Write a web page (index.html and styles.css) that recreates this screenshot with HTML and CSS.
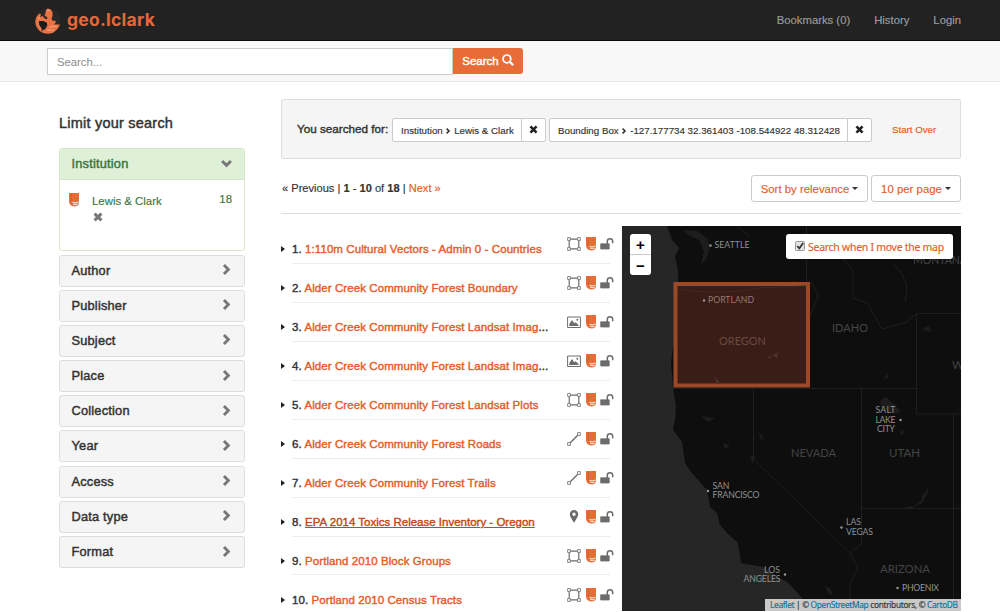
FILE: index.html
```
<!DOCTYPE html>
<html lang="en">
<head>
<meta charset="utf-8">
<title>geo.lclark</title>
<link rel="stylesheet" href="styles.css">
</head>
<body>
<svg class="defs" width="0" height="0">
  <symbol id="chevron" viewBox="0 0 10 10"><path d="M2.700 1 6.700 5 2.700 9" fill="none" stroke="currentColor" stroke-width="2.600"/></symbol>
  <symbol id="cross" viewBox="0 0 10 10"><path d="M1.600 1.600 8.400 8.400M8.400 1.600 1.600 8.400" fill="none" stroke="currentColor" stroke-width="2.900"/></symbol>
  <symbol id="shield" viewBox="0 0 12 14"><path d="M1 0H11V9Q11 13.500 6.500 13.500Q1 13 1 8Z" fill="#e86c35"/><path d="M3.300 1V8.500" stroke="#d0582a" stroke-width=".8"/><path d="M4.500 9.300Q7 10.500 10.700 9M5 11Q7 12 9.500 11.300" fill="none" stroke="#fbd9c8" stroke-width="1.200"/></symbol>
  <symbol id="unlock" viewBox="0 0 14 14"><path d="M.7 6.800H9.200V12H.7Z" fill="#6c6c6c" stroke="#6c6c6c" stroke-width=".8" stroke-linejoin="round"/><path d="M7.300 7V4.300Q7.300 1.700 10 1.700Q12.700 1.700 12.700 4.300V6.300" fill="none" stroke="#6c6c6c" stroke-width="1.500"/></symbol>
  <symbol id="polygon" viewBox="0 0 14 14"><g fill="#fff" stroke="#6c6c6c"><path d="M2.200 2.200H11.800V11.800H2.200Z" stroke-width="1.200"/><path d="M.6.600H3.400V3.400H.6ZM10.600.600H13.400V3.400H10.600ZM.6 10.600H3.400V13.400H.6ZM10.600 10.600H13.400V13.400H10.600Z" stroke-width=".8"/></g></symbol>
  <symbol id="line" viewBox="0 0 14 14"><g fill="#fff" stroke="#6c6c6c"><path d="M2 12 12 2" stroke-width="1.400"/><path d="M.6 10.600H3.400V13.400H.6ZM10.600.600H13.400V3.400H10.600Z" stroke-width=".8"/></g></symbol>
  <symbol id="image" viewBox="0 0 14 14"><path d="M.6 2H13.400V12.500H.6Z" fill="#fff" stroke="#6c6c6c"/><path d="M2.300 11V9L5 5 7.200 8.300 8.600 7.200 11.500 10V11Z" fill="#6c6c6c"/><circle cx="10.300" cy="4.700" r="1" fill="#6c6c6c"/></symbol>
  <symbol id="point" viewBox="0 0 14 14"><path fill-rule="evenodd" d="M7 0A4.200 4.200 0 0 1 11.200 4.200Q11.200 6.500 7 12.700Q2.800 6.500 2.800 4.200A4.200 4.200 0 0 1 7 0ZM7 2.600A1.700 1.700 0 1 0 7 6A1.700 1.700 0 1 0 7 2.600Z" fill="#6c6c6c"/></symbol>
</svg>

<header class="navbar">
  <a class="brand">
    <svg class="globe" viewBox="0 0 28 28"><circle cx="14" cy="14" r="12.700" fill="#2a2827"/><path d="M12 3 13.500 1.500 15.500 2 17 3 18.500 5 18.500 9 17.500 12 19 14 21 13.500 22 15 20 17.500 26 17.500Q24 23 18.500 26Q12 27.800 7 25L9 23 11.500 22 13.500 18 12.500 15.500 8.500 14 5 14.500 5.500 18 8 22 7 25Q1.500 21 1.300 14.500Q1.800 9 5.500 6.500L7 7.500 6 10 9 9 10 11 12.500 12.500 13.500 10.500 10.500 8.500 11.500 6Z" fill="#ea7345"/><path d="M13 4 16 3M15 20 23 19M13 23 20 23M4 11 6 11" stroke="#f7a784"/><path d="M5 14 9 14 13 16 12.500 19 9.500 23 8 22 5.500 18Z" fill="#1e1b1b"/></svg>
    <span>geo.lclark</span>
  </a>
  <nav class="nav-links"><a class="bookmarks">Bookmarks (0)</a><a class="history">History</a><a class="login">Login</a></nav>
</header>

<div class="search-bar">
  <div class="search-input">Search...</div>
  <button class="search-button"><span>Search</span><svg viewBox="0 0 12 12"><circle cx="4.900" cy="4.900" r="3.900" fill="none" stroke="#fff" stroke-width="1.700"/><path d="M7.600 7.600 11.200 11.200" stroke="#fff" stroke-width="2.200"/></svg></button>
</div>

<main class="page">
  <aside class="sidebar">
    <h2>Limit your search</h2>
    <section class="facet open">
      <h3><span>Institution</span><svg class="chev down"><use href="#chevron"/></svg></h3>
      <div class="facet-body">
        <svg class="shield"><use href="#shield"/></svg>
        <div class="facet-value"><span>Lewis &amp; Clark</span><svg class="remove"><use href="#cross"/></svg></div>
        <span class="count">18</span>
      </div>
    </section>
    <section class="facet"><h3><span>Author</span><svg class="chev"><use href="#chevron"/></svg></h3></section>
    <section class="facet"><h3><span>Publisher</span><svg class="chev"><use href="#chevron"/></svg></h3></section>
    <section class="facet"><h3><span>Subject</span><svg class="chev"><use href="#chevron"/></svg></h3></section>
    <section class="facet"><h3><span>Place</span><svg class="chev"><use href="#chevron"/></svg></h3></section>
    <section class="facet"><h3><span>Collection</span><svg class="chev"><use href="#chevron"/></svg></h3></section>
    <section class="facet"><h3><span>Year</span><svg class="chev"><use href="#chevron"/></svg></h3></section>
    <section class="facet"><h3><span>Access</span><svg class="chev"><use href="#chevron"/></svg></h3></section>
    <section class="facet"><h3><span>Data type</span><svg class="chev"><use href="#chevron"/></svg></h3></section>
    <section class="facet"><h3><span>Format</span><svg class="chev"><use href="#chevron"/></svg></h3></section>
  </aside>

  <div class="content">
    <div class="constraints">
      <span class="label">You searched for:</span>
      <div class="constraint first"><span class="text">Institution <svg class="sep"><use href="#chevron"/></svg> Lewis &amp; Clark</span><span class="x"><svg><use href="#cross"/></svg></span></div>
      <div class="constraint second"><span class="text">Bounding Box <svg class="sep"><use href="#chevron"/></svg> -127.177734 32.361403 -108.544922 48.312428</span><span class="x"><svg><use href="#cross"/></svg></span></div>
      <a class="start-over">Start Over</a>
    </div>
    <div class="toolbar">
      <div class="pager">« Previous | <b>1</b> - <b>10</b> of <b>18</b> | <a>Next »</a></div>
      <div class="menus"><button class="menu sort">Sort by relevance<i></i></button><button class="menu per">10 per page<i></i></button></div>
    </div>
    <div class="results">
      <ol class="list">
        <li><i></i><span class="title">1. <a>1:110m Cultural Vectors - Admin 0 - Countries</a></span><span class="icons"><svg><use href="#polygon"/></svg><svg class="shield"><use href="#shield"/></svg><svg><use href="#unlock"/></svg></span></li>
        <li><i></i><span class="title">2. <a>Alder Creek Community Forest Boundary</a></span><span class="icons"><svg><use href="#polygon"/></svg><svg class="shield"><use href="#shield"/></svg><svg><use href="#unlock"/></svg></span></li>
        <li><i></i><span class="title">3. <a>Alder Creek Community Forest Landsat Imag</a>...</span><span class="icons"><svg><use href="#image"/></svg><svg class="shield"><use href="#shield"/></svg><svg><use href="#unlock"/></svg></span></li>
        <li><i></i><span class="title">4. <a>Alder Creek Community Forest Landsat Imag</a>...</span><span class="icons"><svg><use href="#image"/></svg><svg class="shield"><use href="#shield"/></svg><svg><use href="#unlock"/></svg></span></li>
        <li><i></i><span class="title">5. <a>Alder Creek Community Forest Landsat Plots</a></span><span class="icons"><svg><use href="#polygon"/></svg><svg class="shield"><use href="#shield"/></svg><svg><use href="#unlock"/></svg></span></li>
        <li><i></i><span class="title">6. <a>Alder Creek Community Forest Roads</a></span><span class="icons"><svg><use href="#line"/></svg><svg class="shield"><use href="#shield"/></svg><svg><use href="#unlock"/></svg></span></li>
        <li><i></i><span class="title">7. <a>Alder Creek Community Forest Trails</a></span><span class="icons"><svg><use href="#line"/></svg><svg class="shield"><use href="#shield"/></svg><svg><use href="#unlock"/></svg></span></li>
        <li><i></i><span class="title">8. <a class="hovered">EPA 2014 Toxics Release Inventory - Oregon</a></span><span class="icons"><svg><use href="#point"/></svg><svg class="shield"><use href="#shield"/></svg><svg><use href="#unlock"/></svg></span></li>
        <li><i></i><span class="title">9. <a>Portland 2010 Block Groups</a></span><span class="icons"><svg><use href="#polygon"/></svg><svg class="shield"><use href="#shield"/></svg><svg><use href="#unlock"/></svg></span></li>
        <li><i></i><span class="title">10. <a>Portland 2010 Census Tracts</a></span><span class="icons"><svg><use href="#polygon"/></svg><svg class="shield"><use href="#shield"/></svg><svg><use href="#unlock"/></svg></span></li>
      </ol>
      <div class="map">
        <svg class="tiles" viewBox="0 0 339 385">
          <rect width="339" height="385" fill="#0e0e0e"/>
          <path fill="#262626" d="M0 0H45L48 8 50 14 57 22 53 31 56 44V56L55 94 51 121 49 137 51 161 54 181 53 194 51 204 60 216 63 237 69 246 76 254 85 264 88 281 95 287 98 299 107 309 116 317 119 337 141 341 156 351 165 356 175 366 180 372 182 385H0Z"/>
          <path fill="#1d1d1d" d="M62 4 75 5 86 13 88 22 84 34 79 38 82 26 77 14 65 8ZM92 149 98 158 95 162ZM145 131 150 130 148 133ZM150 129 156 127 155 132ZM300 103 307 100 309 106ZM261 154 266 147 267 151ZM258 175 264 171 274 180 279 186 272 188 260 183ZM78 188 84 191 93 192 86 196ZM101 217 108 220 103 223ZM136 206 141 210 140 215ZM128 230 133 230 131 238ZM202 360 208 362 211 369 207 368ZM284 281 292 280 300 274 299 270 304 266 306 259 306 266 300 277 287 283ZM280 203 282 207 278 210Z"/>
          <path fill="none" stroke="#1f1f1f" d="M184.500 0V56M55 63Q100 67 135 61L190 56 196 70 184 100V162M51 162.500H294M131.500 162V233L228 327 236 342 228 357V385M239.500 163V318L228 327M239 282.500H339M294.500 88V188H339M294.500 87.500H339M331.500 188V385M215 27 231 44V72L245 77 260 103 285 96 294 88M272 38Q290 56 283 76M115 0 128 11"/>
          <rect x="53.500" y="58" width="132.500" height="101.500" fill="#3a1d16" stroke="#9c4928" stroke-width="4"/>
          <path fill="#4b342f" d="M92 149 98 158 95 158ZM145 131 150 130 148 133ZM150 129 156 127 155 132Z"/><path d="M57 63Q100 70 135 62L184 60" fill="none" stroke="#45271f"/>
          <g class="state"><text x="291" y="38" textLength="54" lengthAdjust="spacingAndGlyphs">MONTANA</text><text x="210" y="106" textLength="36" lengthAdjust="spacingAndGlyphs">IDAHO</text><text x="97" y="118.500" textLength="47" lengthAdjust="spacingAndGlyphs" fill="#6b4a42">OREGON</text><text x="330" y="142.500">WYOMING</text><text x="169" y="230.500" textLength="45" lengthAdjust="spacingAndGlyphs">NEVADA</text><text x="267" y="231" textLength="31" lengthAdjust="spacingAndGlyphs">UTAH</text><text x="258" y="346.500" textLength="50" lengthAdjust="spacingAndGlyphs">ARIZONA</text></g>
          <g class="city"><text x="92.500" y="22" textLength="35">SEATTLE</text><text x="86" y="77" textLength="46" fill="#927a72">PORTLAND</text><text x="253.500" y="187" textLength="20">SALT</text><text x="253.500" y="196.500" textLength="20">LAKE</text><text x="255" y="206" textLength="18">CITY</text><text x="90.500" y="262.500" textLength="17">SAN</text><text x="90.500" y="272" textLength="47">FRANCISCO</text><text x="224" y="299" textLength="15">LAS</text><text x="224" y="308.500" textLength="27">VEGAS</text><text x="142" y="346.500" textLength="16">LOS</text><text x="121.500" y="356" textLength="37">ANGELES</text><text x="280" y="364.500" textLength="37">PHOENIX</text></g>
          <g fill="#999"><circle cx="88.500" cy="19.500" r="1.200"/><circle cx="82" cy="74.500" r="1.200"/><circle cx="278.500" cy="194" r="1.200"/><circle cx="86" cy="265" r="1.200"/><circle cx="219.500" cy="301.500" r="1.200"/><circle cx="163" cy="348.500" r="1.200"/><circle cx="275.500" cy="362" r="1.200"/></g>
        </svg>
        <div class="zoom"><span>+</span><span>−</span></div>
        <div class="move-search"><svg viewBox="0 0 10 10"><rect x=".5" y=".5" width="9" height="9" rx="1" fill="#e4e4e4" stroke="#999"/><path d="M2.200 5 4.300 7.300 8.200 2" fill="none" stroke="#333" stroke-width="1.700"/></svg><span>Search when I move the map</span></div>
        <div class="attribution"><a>Leaflet</a> | © <a>OpenStreetMap</a> contributors, © <a>CartoDB</a></div>
      </div>
    </div>
  </div>
</main>
</body>
</html>
```
FILE: styles.css
```
* { box-sizing: border-box; }
body { margin: 0; height: 612px; overflow: hidden; background: #fff; color: #333; font: 11px/16px "Liberation Sans", Arial, sans-serif; }
svg { display: block; flex: none; }
.defs { display: none; }
h2, h3, ol { margin: 0; padding: 0; font-weight: normal; }
button { font: inherit; border: 0; padding: 0; }
a { color: #e55c28; }

.navbar { height: 41px; background: #222; border-bottom: 1px solid #090909; display: flex; justify-content: space-between; padding: 0 39px 0 34px; }
.brand { display: flex; align-items: center; gap: 5px; color: #e3683a; font: 700 17.500px/38px Inter, sans-serif; letter-spacing: .25px; }
.globe { width: 28px; height: 28px; margin-top: 2px; }
.nav-links { display: flex; gap: 24px; line-height: 41px; font-size: 11.300px; }
.nav-links a { color: #9d9d9d; -webkit-text-stroke: .15px; }

.search-bar { height: 41px; background: #f8f8f8; border-bottom: 1px solid #e7e7e7; display: flex; padding: 7px 0 0 47px; }
.search-input { width: 406px; height: 27px; border: 1px solid #ccc; background: #fff; color: #8c8c8c; padding-left: 9px; font-size: 11.300px; line-height: 26px; }
.search-button { width: 70px; height: 26px; background: #e86c37; color: #fff; border-radius: 0 3px 3px 0; display: flex; align-items: center; justify-content: center; gap: 3px; font-size: 11.500px; -webkit-text-stroke: .4px; }
.search-button svg { width: 12px; height: 12px; margin-top: -3px; }

.page { display: flex; gap: 36px; padding: 17px 39px 0 59px; }
.sidebar { width: 186px; flex: none; }
.sidebar h2 { font-size: 14.500px; letter-spacing: .22px; line-height: 20px; margin: 14px 0 15px; -webkit-text-stroke: .45px; }
.facet { height: 32px; margin-bottom: 3.200px; border: 1px solid #ddd; border-radius: 3px; background: #f5f5f5; overflow: hidden; }
.facet h3 { height: 30px; padding: 0 12px 0 11.500px; display: flex; align-items: center; justify-content: space-between; font-size: 12.800px; letter-spacing: .2px; -webkit-text-stroke: .45px; }
.chev { width: 11px; height: 11px; color: #777; margin-top: -2px; }
.chev.down { transform: rotate(90deg); }
.facet.open { height: 103px; margin-bottom: 3.500px; border-color: #d9e7cd; background: #fff; }
.open h3 { height: 31px; background: #dff0d8; border-bottom: 1px solid #d6e9c6; color: #3c763d; }
.facet-body { display: flex; padding: 12px 12px 0 8px; color: #3c763d; font-size: 11.400px; line-height: 15px; -webkit-text-stroke: .15px; }
.shield { width: 12px; height: 14px; }
.facet-body .shield { margin-top: 1px; }
.facet-value { margin: 2px auto 0 12px; }
.remove { width: 10px; height: 10px; color: #777; margin: 3px 0 0 1px; }

.content { width: 680px; }
.constraints { height: 60px; background: #f5f5f5; border: 1px solid #ddd; border-radius: 2px; display: flex; align-items: center; padding-left: 15px; }
.label { width: 95px; font-size: 11.700px; -webkit-text-stroke: .4px; white-space: nowrap; }
.constraint { height: 24px; border: 1px solid #ccc; border-radius: 2px; background: #fff; display: flex; font-size: 9.750px; line-height: 23px; margin-top: 1px; white-space: nowrap; -webkit-text-stroke: .15px; }
.first { width: 154px; }
.second { width: 323px; margin-left: 3px; }
.text { flex: 1; padding-left: 8px; }
.sep { display: inline-block; width: 6px; height: 6px; }
.x { width: 24px; border-left: 1px solid #ccc; display: flex; align-items: center; justify-content: center; color: #222; }
.x svg { width: 9px; height: 9px; }
.start-over { margin: 2px 0 0 20px; font-size: 9.700px; -webkit-text-stroke: .15px; }

.toolbar { height: 55px; border-bottom: 1px solid #ddd; display: flex; justify-content: space-between; padding: 16px 0 0 1px; }
.pager { font-size: 11.100px; line-height: 26px; -webkit-text-stroke: .15px; }
.menus { display: flex; gap: 3px; }
.menu { height: 27px; border: 1px solid #ccc; border-radius: 3px; background: #fff; color: #e55c28; font-size: 11.400px; display: flex; align-items: center; justify-content: center; gap: 3px; -webkit-text-stroke: .15px; }
.menu i { border: 3px solid transparent; border-top-color: #333; border-bottom: 0; }
.sort { width: 117px; }
.per { width: 90px; }

.results { display: flex; justify-content: space-between; padding-top: 12px; }
.list { list-style: none; width: 333px; padding-top: 4px; }
.list li { position: relative; height: 38.950px; display: flex; align-items: center; }
.list li::after { content: ""; position: absolute; left: 11px; right: 4px; bottom: 5px; border-top: 1px solid #ececec; }
.list i { border: 3px solid transparent; border-left: 4px solid #222; border-right: 0; margin: 0 7px 0 0; }
.title { font-size: 11.500px; letter-spacing: .08px; -webkit-text-stroke: .4px; white-space: nowrap; }
.title .hovered { color: #c2471a; text-decoration: underline; letter-spacing: 0; }
.icons { display: flex; gap: 5px; margin: -10px 0 0 auto; }
.icons svg { width: 14px; height: 14px; }
.icons .shield { width: 12px; margin: 0 -2px 0 -1px; }

.map { position: relative; width: 339px; height: 385px; overflow: hidden; }
.tiles { width: 339px; height: 385px; }
.state { font: 11.500px Lato, sans-serif; fill: #444; }
.city { font: 8.700px Lato, sans-serif; fill: #909090; }
.zoom { position: absolute; left: 8px; top: 8px; width: 21px; height: 41px; background: #fff; border-radius: 3px; color: #000; font: 700 15px/21px "Liberation Sans", sans-serif; text-align: center; }
.zoom span { display: block; height: 20px; }
.zoom span + span { border-top: 1px solid #ccc; height: 21px; }
.move-search { position: absolute; left: 164px; top: 8px; width: 167px; height: 25px; border-radius: 3px; background: #fff; color: #e55c28; display: flex; align-items: center; gap: 3px; padding-left: 9px; font: 10.500px/24px "Noto Sans", sans-serif; letter-spacing: -.28px; white-space: nowrap; -webkit-text-stroke: .15px; }
.move-search svg { width: 10px; height: 10px; margin-top: -1px; }
.attribution { position: absolute; right: 0; bottom: 0; width: 196px; height: 12px; padding-left: 5px; background: #c9c9c9; color: #333; font: 8.300px/12px "Noto Sans", sans-serif; letter-spacing: -.31px; white-space: nowrap; -webkit-text-stroke: .15px; }
.attribution a { color: #0078a8; }
```
